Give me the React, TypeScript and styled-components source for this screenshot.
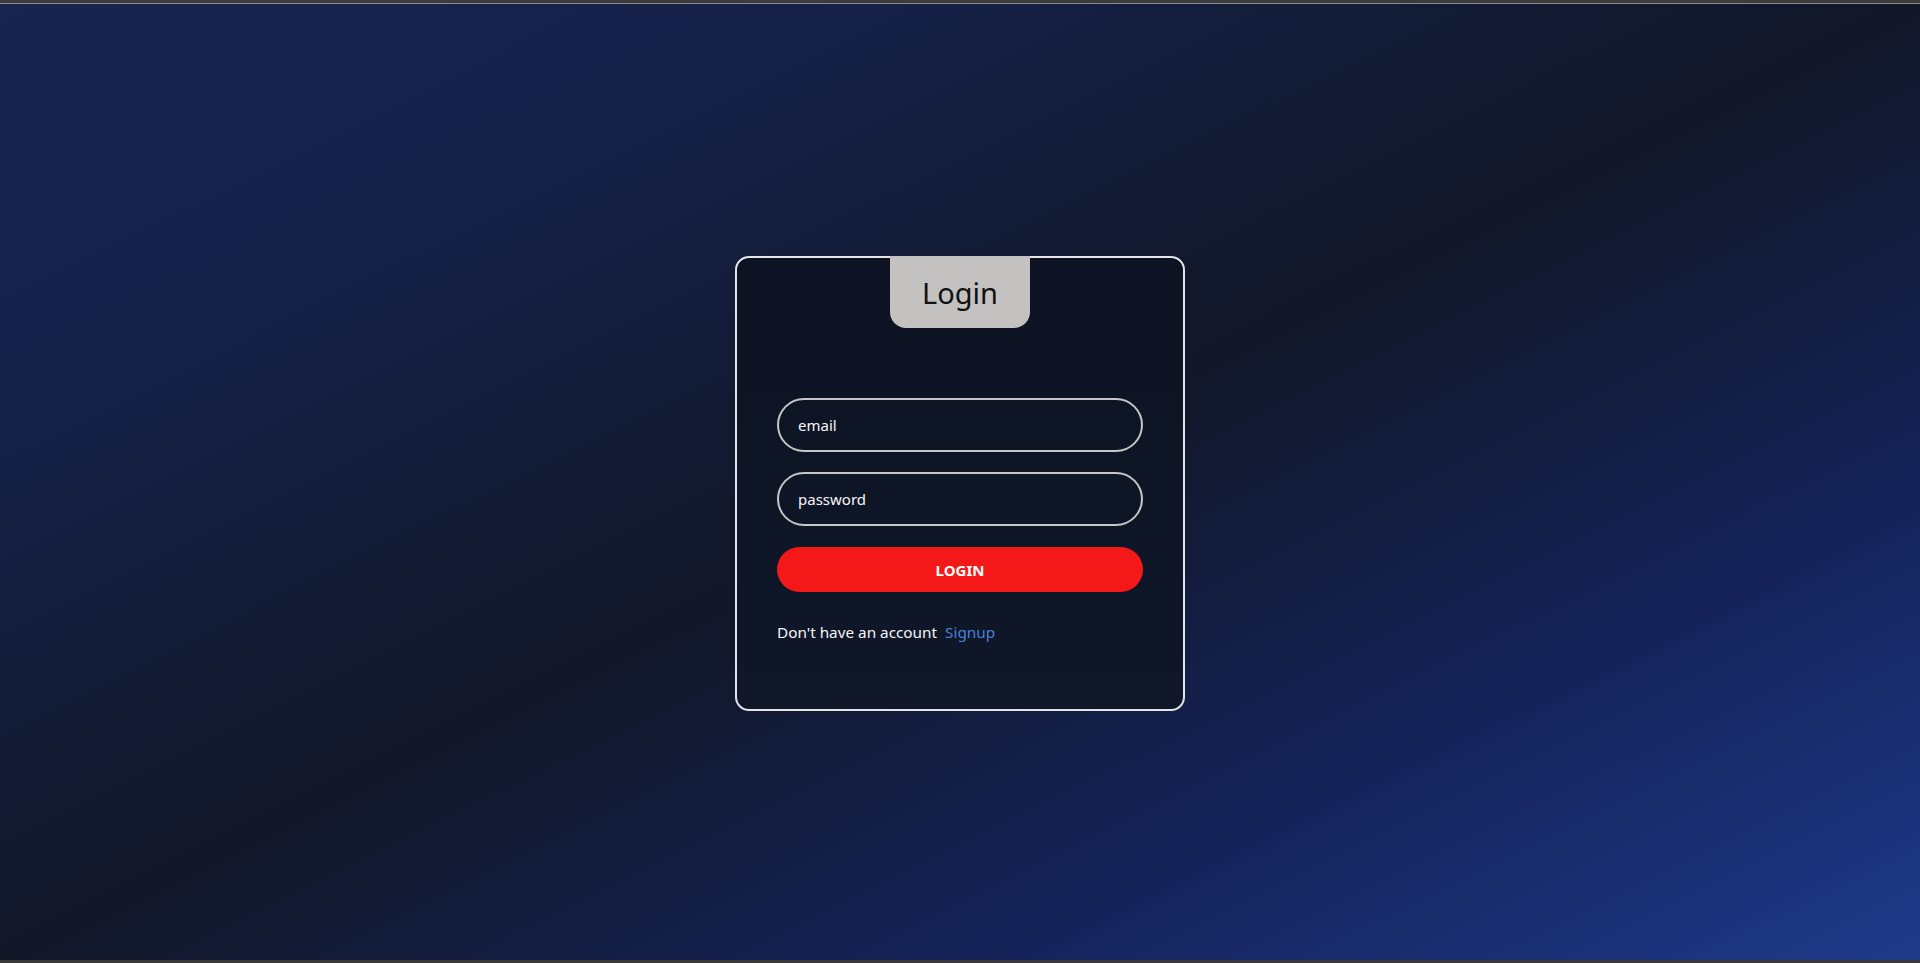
import * as React from 'react';
import styled, { createGlobalStyle } from 'styled-components';

const GlobalStyle = createGlobalStyle`
  html, body {
    margin: 0;
    padding: 0;
    height: 100%;
  }
  body {
    font-family: "Noto Sans", "Open Sans", sans-serif;
    background: #3b3b3b;
  }
  #root {
    height: 100%;
  }
`;

const Frame = styled.div`
  display: flex;
  flex-direction: column;
  height: 963px;
  overflow: hidden;
`;

const TopEdge = styled.div`
  height: 3px;
  background: #3c3c3c;
  border-bottom: 1px solid #8a8a8a;
  flex-shrink: 0;
`;

const BottomEdge = styled.div`
  height: 3px;
  background: #383838;
  flex-shrink: 0;
`;

const Screen = styled.main`
  flex: 1;
  display: flex;
  align-items: center;
  justify-content: center;
  padding-top: 3px;
  background: linear-gradient(to bottom right, #17254f 0%, #152149 22%, #111727 50%, #15235a 76%, #1e3a8a 100%);
`;

const Card = styled.div`
  position: relative;
  width: 450px;
  box-sizing: border-box;
  padding: 140px 40px 65px;
  border: 2px solid #e4e4e4;
  border-radius: 14px;
  background: linear-gradient(to bottom, #0d1322, #0f1729);
`;

const Tab = styled.div`
  position: absolute;
  top: -2px;
  left: 50%;
  transform: translateX(-50%);
  width: 140px;
  height: 72px;
  background: #c4c2c0;
  border-radius: 0 0 16px 16px;
  display: flex;
  align-items: center;
  justify-content: center;
  font-size: 29px;
  color: #111;
`;

const Form = styled.form`
  display: flex;
  flex-direction: column;
  gap: 20px;
  margin: 0;
`;

const Field = styled.input`
  height: 54px;
  box-sizing: border-box;
  padding: 0 19px;
  border: 2px solid #c6c6c6;
  border-radius: 27px;
  background: transparent;
  color: #fff;
  font-family: inherit;
  font-size: 15px;
  outline: none;
  &::placeholder {
    color: #f6f6f6;
  }
`;

const SubmitButton = styled.button`
  height: 45px;
  margin-top: 1px;
  border: none;
  border-radius: 23px;
  background: #f51818;
  color: #fff;
  font-family: inherit;
  font-size: 15px;
  font-weight: 700;
  cursor: pointer;
`;

const Footer = styled.p`
  margin: 28px 0 0;
  font-size: 15.3px;
  line-height: 24px;
  color: #f6f6f6;
`;

const SignupLink = styled.a`
  margin-left: 8px;
  color: #4a80d8;
  text-decoration: none;
`;

export default () => {
  const [email, setEmail] = React.useState('');
  const [password, setPassword] = React.useState('');

  return (<>
    <GlobalStyle />
    <Frame>
      <TopEdge />
      <Screen>
        <Card>
          <Tab>Login</Tab>
          <Form onSubmit={(e) => e.preventDefault()}>
            <Field type="email" placeholder="email" value={email} onChange={(e) => setEmail(e.target.value)} />
            <Field type="password" placeholder="password" value={password} onChange={(e) => setPassword(e.target.value)} />
            <SubmitButton type="submit">LOGIN</SubmitButton>
          </Form>
          <Footer>
            Don't have an account
            <SignupLink href="#">Signup</SignupLink>
          </Footer>
        </Card>
      </Screen>
      <BottomEdge />
    </Frame>
  </>);
}
